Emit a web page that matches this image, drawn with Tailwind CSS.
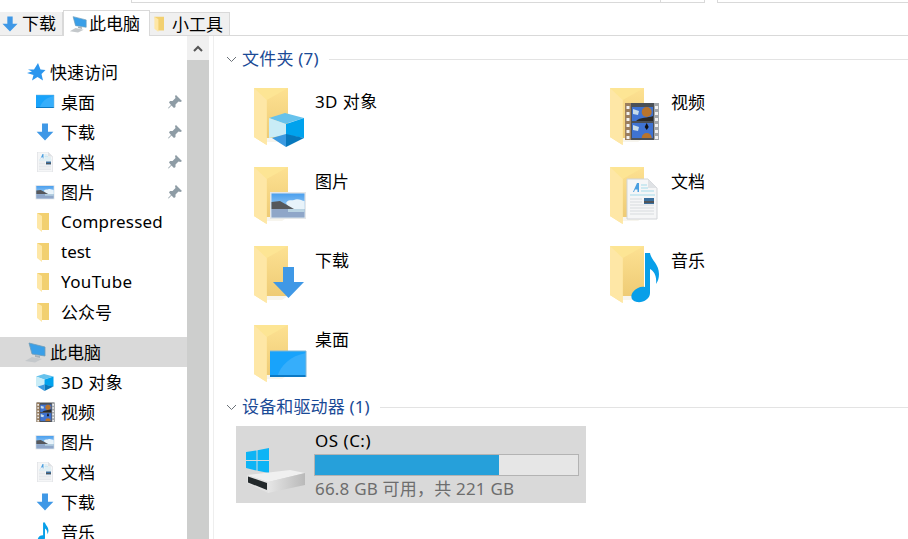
<!DOCTYPE html>
<html lang="zh-CN">
<head>
  <meta charset="UTF-8" />
  <title>此电脑</title>
  <script src="https://cdn.jsdelivr.net/npm/@tailwindcss/browser@4"></script>
</head>
<body class="bg-white overflow-hidden h-[539px] text-black text-[17px] font-['Noto_Sans','Noto_Sans_CJK_SC',sans-serif]">

  <!-- shared icon shapes -->
  <svg class="absolute w-0 h-0">
    <defs>
      <linearGradient id="back" x1="0" y1="0" x2="0" y2="1"><stop offset="0" stop-color="#fde192"/><stop offset="1" stop-color="#eecb75"/></linearGradient>
      <linearGradient id="sky" x1="0" y1="0" x2="0" y2="1"><stop offset="0" stop-color="#4a9fee"/><stop offset="1" stop-color="#cfe6f5"/></linearGradient>
      <linearGradient id="side" x1="0" y1="0" x2="1" y2="0"><stop offset="0" stop-color="#e6e6e6"/><stop offset="1" stop-color="#b9b9b9"/></linearGradient>
      <g id="folder">
        <path d="M16 2H38V52H16Z" fill="url(#back)"/>
        <path d="M16 52H38L32 56H16Z" fill="#f7f5ee"/>
        <path d="M4 2H38L16.700 14V59L4 51Z" fill="#fde594"/>
        <path d="M4 2L16.700 14V59L4 51Z" fill="#fee7a6"/>
      </g>
      <g id="cube">
        <path d="M35 27L54 32L35 38L19 32Z" fill="#67c2ec"/>
        <path d="M19 32L36 38V49L19 52Z" fill="#c9ecf6"/>
        <path d="M36 38L54 32V52L36 49Z" fill="#00a2ed"/>
        <path d="M22 52L36 48V61Z" fill="#3b9ae1"/>
        <path d="M36 48L54 52L36 61Z" fill="#0778bd"/>
      </g>
      <g id="pic">
        <rect x="20" y="27" width="36" height="27" fill="#e4e6e8"/>
        <rect x="21.500" y="28.500" width="33" height="24" fill="url(#sky)"/>
        <path d="M36 38C38 34 42 36 44 35C48 33 52 36 54.500 36V44H40Z" fill="#e8f3fa"/>
        <path d="M21.500 37L30 36L44 44H21.500Z" fill="#56585c"/>
        <path d="M21.500 44H54.500V52.500H21.500Z" fill="#8fa6c8"/>
        <path d="M38 44H54.500V47H38Z" fill="#b9d3e2"/>
      </g>
      <g id="arrow">
        <path d="M33 23H44V38H54L38.500 54L23 38H33Z" fill="#3f98e6"/>
      </g>
      <g id="desk">
        <rect x="20" y="28" width="36" height="26" fill="#18a3fb"/>
        <path d="M27 54C31 42 40 33 56 30V54Z" fill="#36aefb"/>
        <rect x="20" y="52" width="36" height="2" fill="#0c79c4"/>
        <path d="M20 28H56V54" fill="none" stroke="#7fb6d6"/>
      </g>
      <g id="film">
        <rect x="19" y="17" width="34" height="37" fill="#4b5056"/>
        <rect x="19" y="17" width="6" height="37" fill="#9b7e5e"/>
        <rect x="48" y="17" width="5" height="37" fill="#a4a8ac"/>
        <path d="M20.500 20h3v3h-3zM20.500 26h3v3h-3zM20.500 32h3v3h-3zM20.500 38h3v3h-3zM20.500 44h3v3h-3zM20.500 50h3v3h-3zM49 20h3v3h-3zM49 26h3v3h-3zM49 32h3v3h-3zM49 38h3v3h-3zM49 44h3v3h-3zM49 50h3v3h-3z" fill="#f2f2f2"/>
        <rect x="26" y="21" width="21" height="14" fill="#3f73d2"/>
        <rect x="26" y="37" width="21" height="15" fill="#3f73d2"/>
        <circle cx="40.700" cy="26" r="5" fill="#b8742c"/>
        <path d="M30 35C34 31 42 32 47 30V35Z" fill="#2c2a26"/>
        <path d="M35.700 52a5 5 0 0 1 10 0z" fill="#b8742c"/>
        <path d="M27 23l6 2-1 4-5-1zM27 39l6 2-1 4-5-1z" fill="#c7dcea"/>
        <path d="M40.700 37l2 4-2 3-2-3z" fill="#111"/>
      </g>
      <g id="doc">
        <path d="M21 14H42L51 23V54H21Z" fill="#f5f6f7" stroke="#d2d5d8"/>
        <path d="M42 14V23H51Z" fill="#dfe2e5"/>
        <path d="M27 27L31 18H33V27H31.500V24.500H29L28 27Z" fill="#4a9fe0"/>
        <path d="M35 20H41M35 23H42M35 26H48M24 30H49" stroke="#a5dbea"/>
        <path d="M24 34H36M24 37H36M24 40H48M24 43H48M24 46H48M24 49H48" stroke="#d7dbde"/>
        <rect x="38" y="33" width="10" height="6" fill="#3a6f9e"/>
        <rect x="38" y="36" width="10" height="2" fill="#50555a"/>
      </g>
      <g id="note">
        <path d="M39 9H44C45 16 53 20 53 30C53 34 52 37 50 40C51 32 48 27 44 25V49C44 55 37 59 31 58C25 57 24 52 27 48C30 44 35 42 39 43Z" fill="#089fe9"/>
      </g>
      <g id="pc">
        <path d="M5 2L21 6V15L8 13Z" fill="#3a9fe8" stroke="#6f9cb8" stroke-width="0.800"/>
        <path d="M11 14L16 15V17L11 16Z" fill="#a8b2b9"/>
        <path d="M1 20L8 16L18 18L11 21.500Z" fill="#c4c8cb"/>
      </g>
      <g id="mini">
        <path d="M3 1H15V18H7Z" fill="#f2d070"/>
        <path d="M3 1L8 4V20L3 16Z" fill="#fee7a6"/>
      </g>
      <g id="pin">
        <path d="M9 1L15 7L13.500 8L11.500 7.500L8.500 10.500L8.500 13L7 14L4.500 11.500L1.500 14.500L1 14L4 11L2 8.500L3 7L5.500 7L8.500 4L8 2Z" fill="#8e9ca5"/>
      </g>
    </defs>
  </svg>

  <!-- top strip: bottom edge of address and search boxes -->
  <div class="flex h-[3px]">
    <div class="ml-[131px] w-[574px] border-x border-b border-[#d9d9d9] flex justify-end">
      <div class="w-[44px] border-l border-[#d9d9d9]"></div>
    </div>
    <div class="ml-[12px] flex-1 border-l border-b border-[#d9d9d9]"></div>
  </div>

  <!-- tabs -->
  <div class="flex items-end h-[33px] border-b border-[#d9d9d9]">
    <div class="w-[63px] h-[23px] bg-[#f0f0f0] border-r border-[#d9d9d9] flex items-center">
      <svg class="w-[18px] h-[18px] ml-[1px]" viewBox="20 20 37 37"><use href="#arrow"/></svg>
      <span class="ml-[3px] mt-px">下载</span>
    </div>
    <div class="w-[87px] h-[26px] -mb-px bg-white border-x border-t border-[#d9d9d9] flex items-center">
      <svg class="w-[18px] h-[18px] ml-[5px]" viewBox="0 0 22 22"><use href="#pc"/></svg>
      <span class="ml-[2px] mt-px">此电脑</span>
    </div>
    <div class="w-[80px] h-[23px] bg-[#f0f0f0] border-t border-r border-[#d9d9d9] flex items-center">
      <svg class="w-4 h-4 ml-[2px]" viewBox="0 0 20 20"><use href="#mini"/></svg>
      <span class="ml-[4px] mt-px">小工具</span>
    </div>
  </div>

  <div class="flex h-[503px] overflow-hidden">
    <!-- navigation pane -->
    <nav class="w-[187px] shrink-0 pt-[21px]">
      <div class="flex items-center h-[30px] pl-[26px]">
        <svg class="w-5 h-5" viewBox="0 0 20 20"><path d="M12 1L14.500 7.500L19.500 8L15.500 12L17 18.500L11.500 15L6 18.500L7.500 13L1 11L6 9.500L2 7.500L8 7.500Z" fill="#2b96ee"/></svg>
        <span class="ml-[4px] mt-px">快速访问</span>
      </div>
      <div class="flex items-center h-[30px] pl-[35px]">
        <svg class="w-5 h-5" viewBox="18 22 40 40"><use href="#desk"/></svg>
        <span class="ml-[6px] mt-px">桌面</span>
        <svg class="w-4 h-4 ml-auto mr-[4px]" viewBox="0 0 16 16"><use href="#pin"/></svg>
      </div>
      <div class="flex items-center h-[30px] pl-[35px]">
        <svg class="w-5 h-5" viewBox="20 20 37 37"><use href="#arrow"/></svg>
        <span class="ml-[6px] mt-px">下载</span>
        <svg class="w-4 h-4 ml-auto mr-[4px]" viewBox="0 0 16 16"><use href="#pin"/></svg>
      </div>
      <div class="flex items-center h-[30px] pl-[35px]">
        <svg class="w-5 h-5" viewBox="16 14 40 40"><use href="#doc"/></svg>
        <span class="ml-[6px] mt-px">文档</span>
        <svg class="w-4 h-4 ml-auto mr-[4px]" viewBox="0 0 16 16"><use href="#pin"/></svg>
      </div>
      <div class="flex items-center h-[30px] pl-[35px]">
        <svg class="w-5 h-5" viewBox="19 21 38 38"><use href="#pic"/></svg>
        <span class="ml-[6px] mt-px">图片</span>
        <svg class="w-4 h-4 ml-auto mr-[4px]" viewBox="0 0 16 16"><use href="#pin"/></svg>
      </div>
      <div class="flex items-center h-[30px] pl-[34px]">
        <svg class="w-5 h-5" viewBox="0 0 20 20"><use href="#mini"/></svg>
        <span class="ml-[7px] tracking-[0.2px]">Compressed</span>
      </div>
      <div class="flex items-center h-[30px] pl-[34px]">
        <svg class="w-5 h-5" viewBox="0 0 20 20"><use href="#mini"/></svg>
        <span class="ml-[7px]">test</span>
      </div>
      <div class="flex items-center h-[30px] pl-[34px]">
        <svg class="w-5 h-5" viewBox="0 0 20 20"><use href="#mini"/></svg>
        <span class="ml-[7px] tracking-[0.4px]">YouTube</span>
      </div>
      <div class="flex items-center h-[30px] pl-[34px]">
        <svg class="w-5 h-5" viewBox="0 0 20 20"><use href="#mini"/></svg>
        <span class="ml-[7px] mt-px">公众号</span>
      </div>

      <div class="flex items-center h-[30px] mt-[10px] pl-[24px] bg-[#d9d9d9]">
        <svg class="w-[22px] h-[22px]" viewBox="0 0 22 22"><use href="#pc"/></svg>
        <span class="ml-[4px] mt-px">此电脑</span>
      </div>
      <div class="flex items-center h-[30px] pl-[35px]">
        <svg class="w-5 h-5" viewBox="17 23 40 40"><use href="#cube"/></svg>
        <span class="ml-[6px] mt-px tracking-[0.3px]">3D 对象</span>
      </div>
      <div class="flex items-center h-[30px] pl-[35px]">
        <svg class="w-5 h-5" viewBox="16 16 38 38"><use href="#film"/></svg>
        <span class="ml-[6px] mt-px">视频</span>
      </div>
      <div class="flex items-center h-[30px] pl-[35px]">
        <svg class="w-5 h-5" viewBox="19 21 38 38"><use href="#pic"/></svg>
        <span class="ml-[6px] mt-px">图片</span>
      </div>
      <div class="flex items-center h-[30px] pl-[35px]">
        <svg class="w-5 h-5" viewBox="16 14 40 40"><use href="#doc"/></svg>
        <span class="ml-[6px] mt-px">文档</span>
      </div>
      <div class="flex items-center h-[30px] pl-[35px]">
        <svg class="w-5 h-5" viewBox="20 20 37 37"><use href="#arrow"/></svg>
        <span class="ml-[6px] mt-px">下载</span>
      </div>
      <div class="flex items-center h-[30px] pl-[35px]">
        <svg class="w-5 h-5" viewBox="18 8 52 52"><use href="#note"/></svg>
        <span class="ml-[6px] mt-px">音乐</span>
      </div>
    </nav>

    <!-- nav scrollbar -->
    <div class="w-[22px] shrink-0 flex flex-col bg-[#cdcecd]">
      <div class="h-6 bg-[#f0f0f0] flex items-center justify-center">
        <svg class="w-[10px] h-[7px]" viewBox="0 0 10 7"><path d="M1 6L5 2L9 6" fill="none" stroke="#555" stroke-width="2"/></svg>
      </div>
    </div>

    <!-- content pane -->
    <main class="ml-[4px] flex-1 border-l border-[#eeeeee] pt-[11px]">
      <div class="flex items-center h-6 pl-[12px] text-[#1a4a96]">
        <svg class="w-[11px] h-[7px]" viewBox="0 0 11 7"><path d="M1 1L5.500 5.500L10 1" fill="none" stroke="#6b7178"/></svg>
        <span class="ml-[5px] tracking-[0.2px]">文件夹 (7)</span>
        <div class="flex-1 ml-[10px] h-px bg-[#e3e3e3]"></div>
      </div>

      <div class="grid grid-cols-[356px_1fr] gap-y-[7px] pl-[36px] mt-[15px]">
        <div class="flex h-[72px]">
          <svg class="w-[60px] h-[64px]" viewBox="0 0 60 64"><use href="#folder"/><use href="#cube"/></svg>
          <span class="ml-[5px] mt-[4px] h-6 leading-6 tracking-[0.4px]">3D 对象</span>
        </div>
        <div class="flex h-[72px]">
          <svg class="w-[60px] h-[64px]" viewBox="0 0 60 64"><use href="#folder"/><use href="#film"/></svg>
          <span class="ml-[5px] mt-[5px] h-6 leading-6">视频</span>
        </div>
        <div class="flex h-[72px]">
          <svg class="w-[60px] h-[64px]" viewBox="0 0 60 64"><use href="#folder"/><use href="#pic"/></svg>
          <span class="ml-[5px] mt-[5px] h-6 leading-6">图片</span>
        </div>
        <div class="flex h-[72px]">
          <svg class="w-[60px] h-[64px]" viewBox="0 0 60 64"><use href="#folder"/><use href="#doc"/></svg>
          <span class="ml-[5px] mt-[5px] h-6 leading-6">文档</span>
        </div>
        <div class="flex h-[72px]">
          <svg class="w-[60px] h-[64px]" viewBox="0 0 60 64"><use href="#folder"/><use href="#arrow"/></svg>
          <span class="ml-[5px] mt-[5px] h-6 leading-6">下载</span>
        </div>
        <div class="flex h-[72px]">
          <svg class="w-[60px] h-[64px]" viewBox="0 0 60 64"><use href="#folder"/><use href="#note"/></svg>
          <span class="ml-[5px] mt-[5px] h-6 leading-6">音乐</span>
        </div>
        <div class="flex h-[72px]">
          <svg class="w-[60px] h-[64px]" viewBox="0 0 60 64"><use href="#folder"/><use href="#desk"/></svg>
          <span class="ml-[5px] mt-[5px] h-6 leading-6">桌面</span>
        </div>
      </div>

      <div class="flex items-center h-6 pl-[12px] text-[#1a4a96]">
        <svg class="w-[11px] h-[7px]" viewBox="0 0 11 7"><path d="M1 1L5.500 5.500L10 1" fill="none" stroke="#6b7178"/></svg>
        <span class="ml-[5px] tracking-[0.15px]">设备和驱动器 (1)</span>
        <div class="flex-1 ml-[10px] h-px bg-[#e3e3e3]"></div>
      </div>

      <!-- drive tile -->
      <div class="flex w-[350px] h-[77px] ml-[22px] mt-[7px] bg-[#d9d9d9]">
        <svg class="w-[72px] h-[77px] shrink-0" viewBox="0 0 72 77">
          <path d="M10 26L20.500 24.500V34H10ZM21.500 24.300L33 22V34H21.500ZM10 35H20.500V44.500L10 42ZM21.500 35H33V47L21.500 44.800Z" fill="#0db4f5"/>
          <path d="M11 49L54 44L69 47L32 56Z" fill="#f0f0f0"/>
          <path d="M32 56L69 47V59L32 67Z" fill="url(#side)"/>
          <path d="M11 49L32 56V67L11 57Z" fill="#e2e2e2"/>
          <path d="M12 50.500L31 57V64L12 56.500Z" fill="#23292b"/>
        </svg>
        <div class="ml-[6px] w-[265px]">
          <div class="h-6 leading-6 mt-[3px] pl-px tracking-[0.5px]">OS (C:)</div>
          <div class="h-[22px] mt-[1px] border border-[#b3b3b3] bg-[#e6e6e6]">
            <div class="h-full bg-[#26a0da]" style="width:70%"></div>
          </div>
          <div class="h-6 leading-6 mt-[1px] pl-px tracking-[0.2px] text-[#6d6d6d]">66.8 GB 可用，共 221 GB</div>
        </div>
      </div>
    </main>
  </div>
</body>
</html>
